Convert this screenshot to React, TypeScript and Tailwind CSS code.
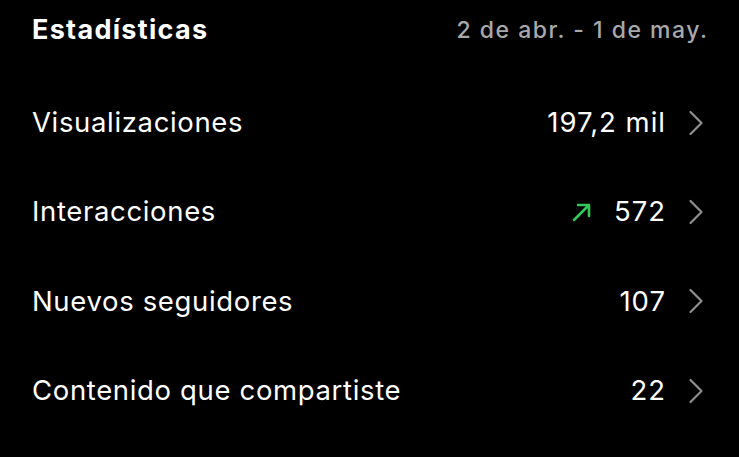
const rows = [
  { label: 'Visualizaciones', value: '197,2 mil', up: false },
  { label: 'Interacciones', value: '572', up: true },
  { label: 'Nuevos seguidores', value: '107', up: false },
  { label: 'Contenido que compartiste', value: '22', up: false },
];

function Chevron() {
  return (
    <svg width="16" height="26" viewBox="0 0 16 26" fill="none" className="shrink-0">
      <path d="M2.5 2 L13.5 13 L2.5 24" stroke="#8e8e8e" strokeWidth="2.2" strokeLinecap="round" strokeLinejoin="round" />
    </svg>
  );
}

function UpArrow() {
  return (
    <svg width="22" height="22" viewBox="0 0 22 22" fill="none" className="shrink-0">
      <path d="M3 19 L18 4 M7 4 H18 V15" stroke="#34c759" strokeWidth="2.6" strokeLinecap="round" strokeLinejoin="round" />
    </svg>
  );
}

export default function App() {
  return (
    <div className="w-[739px] h-[457px] bg-black text-white font-['Inter','Noto_Sans',sans-serif] overflow-hidden">
      <div className="flex items-center justify-between px-[32px] h-[61px]">
        <span className="text-[27px] font-bold tracking-[1.3px]">Estadísticas</span>
        <span className="text-[23px] font-medium text-[#a9a9a9] tracking-[1.5px] mr-[-1.5px]">2 de abr. - 1 de may.</span>
      </div>
      <div className="flex flex-col pt-[17px]">
        {rows.map((r) => (
          <div key={r.label} className="flex items-center justify-between h-[89.3px] pl-[32px] pr-[35px]">
            <span className="text-[27.5px] tracking-[0.65px]">{r.label}</span>
            <div className="flex items-center">
              {r.up && <div className="mr-[21px]"><UpArrow /></div>}
              <span className="text-[27.5px] tracking-[1px]">{r.value}</span>
              <div className="ml-[22px]"><Chevron /></div>
            </div>
          </div>
        ))}
      </div>
    </div>
  );
}
